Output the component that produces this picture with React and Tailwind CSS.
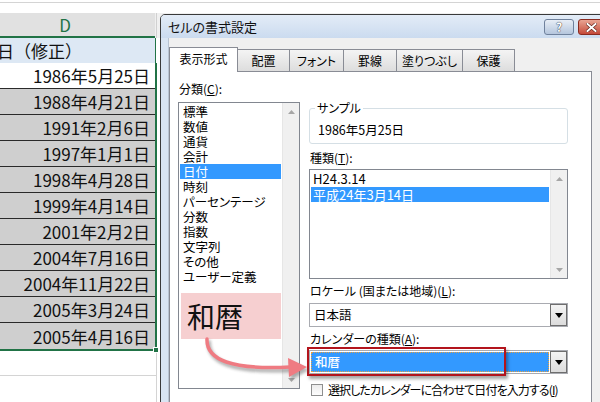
import React from "react";

const JP = "font-['Noto_Sans_CJK_JP',sans-serif]";

function Tri({ up, color = "#a6a6a6", w = 7, h = 4 }) {
  return (
    <svg width={w} height={h} viewBox="0 0 7 4">
      {up ? <polygon points="0,4 7,4 3.5,0" fill={color} /> : <polygon points="0,0 7,0 3.5,4" fill={color} />}
    </svg>
  );
}

function VScroll() {
  return (
    <div className="flex flex-col w-[17px] shrink-0 h-full bg-[#f0f0f0] border-l border-[#e6e6e6]">
      <div className="h-[17px] flex items-center justify-center"><Tri up /></div>
      <div className="flex-1" />
      <div className="h-[17px] flex items-center justify-center"><Tri /></div>
    </div>
  );
}

function DropBtn() {
  return (
    <div className="w-[17px] h-full border border-[#6e6e6e] bg-linear-to-b from-[#f4f4f4] to-[#dcdcdc] flex items-center justify-center">
      <svg width="8" height="5" viewBox="0 0 8 5"><polygon points="0,0 8,0 4,5" fill="#000" /></svg>
    </div>
  );
}

const dates = [
  "1986年5月25日",
  "1988年4月21日",
  "1991年2月6日",
  "1997年1月1日",
  "1998年4月28日",
  "1999年4月14日",
  "2001年2月2日",
  "2004年7月16日",
  "2004年11月22日",
  "2005年3月24日",
  "2005年4月16日",
];

const cats = ["標準", "数値", "通貨", "会計", "日付", "時刻", "パーセンテージ", "分数", "指数", "文字列", "その他", "ユーザー定義"];

function Sheet() {
  return (
    <div className={`flex flex-col w-full ${JP}`}>
      <div className="h-[13px] pt-[2px]">
        <div className="border-t border-[#d4d4d4]" />
      </div>
      <div className="h-[25px] flex bg-[#f0f0f0]">
        <div className="w-[155px] h-full bg-[#e1e1e1] border-b-2 border-[#217346] flex">
          <div className="w-[130px] flex items-center justify-center text-[17px] text-[#217346] leading-none">D</div>
        </div>
        <div className="w-[2px] h-full border-r border-[#d0d0d0]" />
      </div>
      <div className="h-[25px] flex">
        <div className="w-[156px] h-full bg-[#dde8f4] border-r border-[#217346] flex items-center">
          <div className="w-[82px] shrink-0 flex justify-end whitespace-nowrap text-[17px] text-[#111] leading-none">
            <span className="shrink-0">生日（修正）</span>
          </div>
        </div>
      </div>
      <div className="w-[157px] border-r-2 border-b-2 border-[#217346]">
        {dates.map((d, i) => (
          <div
            key={d}
            className={`h-[26px] flex items-center justify-end pr-[5px] text-[17px] leading-none text-[#111] border-b border-[#2a2a2a] last:border-b-0 ${i === 0 ? "bg-white" : "bg-[#cfcfcf]"}`}
          >
            {d}
          </div>
        ))}
      </div>
      <div className="h-[25px] w-[157px] border-r border-b border-[#d4d4d4]" />
      <div className="h-[30px] w-[157px] border-r border-[#d4d4d4]" />
    </div>
  );
}

function Dialog() {
  const tabs = [
    { t: "配置", w: "w-[53px]" },
    { t: "フォント", w: "w-[55px]" },
    { t: "罫線", w: "w-[54px]" },
    { t: "塗りつぶし", w: "w-[67px]" },
    { t: "保護", w: "w-[53px]" },
  ];
  return (
    <div className={`absolute left-[160px] top-[14px] w-[446px] h-[392px] border border-[#3a3a3a] rounded-tl-[5px] bg-[#d9e5f3] flex flex-col ${JP} text-[12px] text-black [font-feature-settings:'palt']`}>
      <div className="h-[23px] bg-linear-to-b from-[#e3ecf7] to-[#cbdbef] rounded-tl-[4px] flex items-center pl-[7px]">
        <span className="text-[13px] leading-none text-[#111]">セルの書式設定</span>
        <div className="ml-auto flex items-start h-full pt-[4px] gap-[4px]">
          <div className="w-[30px] h-[16px] rounded-[3px] border border-[#6f819c] bg-linear-to-b from-[#e8eef6] to-[#b5c6dd] flex items-center justify-center text-[12px] font-bold text-white leading-none [text-shadow:0_0_1px_#334,0_0_1px_#334]">?</div>
          <div className="w-[27px] h-[16px] rounded-[3px] border border-[#8a2b20] bg-linear-to-b from-[#e8a493] to-[#c4493a] flex items-center justify-center">
            <svg width="11" height="9" viewBox="0 0 11 9">
              <path d="M1.5 1 L9.5 8 M9.5 1 L1.5 8" stroke="#5a1a12" strokeWidth="3.2" strokeLinecap="square" />
              <path d="M1.5 1 L9.5 8 M9.5 1 L1.5 8" stroke="#fff" strokeWidth="2" strokeLinecap="square" />
            </svg>
          </div>
        </div>
      </div>
      <div className="flex-1 flex">
        <div className="w-[7px]" />
        <div className="w-[429px] bg-[#f0f0f0] border-l border-[#b9c4d2] flex flex-col pt-[9px]">
          <div className="flex items-end h-[25px] pl-[0px] relative z-10">
            <div className="w-[69px] h-[25px] bg-white border border-b-0 border-[#898c95] flex items-center justify-center pb-[2px]">表示形式</div>
            {tabs.map((t) => (
              <div key={t.t} className={`${t.w} ml-[-1px] h-[22px] mb-[1px] bg-linear-to-b from-[#f4f4f4] to-[#dddddd] border border-b-0 border-[#898c95] flex items-center justify-center`}>
                {t.t}
              </div>
            ))}
          </div>
          <div className="w-[423px] flex-1 bg-white border border-[#898c95] mt-[-1px] flex pl-[8px]">
            <div className="w-[122px] flex flex-col pt-[9px]">
              <div className="h-[16px] leading-[16px] pl-[1px]">分類(<span className="underline">C</span>):</div>
              <div className="mt-[5px] h-[287px] border border-[#828790] flex">
                <div className="flex-1 flex flex-col pt-[1px] pl-[1px] pr-[1px]">
                  {cats.map((c) => (
                    <div key={c} className={`h-[15px] leading-[15px] pl-[3px] text-[12.5px] whitespace-nowrap ${c === "日付" ? "bg-[#3399ff] text-white" : ""}`}>
                      {c}
                    </div>
                  ))}
                  <div className="mt-[9px] ml-[1px] h-[46px] bg-[#f6cfd0] flex items-center pl-[6px] text-[28px] leading-none text-[#111]">和暦</div>
                </div>
                <VScroll />
              </div>
            </div>
            <div className="w-[259px] ml-[9px] flex flex-col">
              <div className="mt-[36px] h-[36px] relative border border-[#d5dfe5] rounded-[3px] pl-[8px] pt-[13px] leading-[16px] text-[12.5px]">
                <span className="absolute top-[-9px] left-[5px] bg-white px-[2px] leading-[16px] text-[12px]">サンプル</span>
                1986年5月25日
              </div>
              <div className="mt-[6px] h-[16px] leading-[16px] pl-[1px]">種類(<span className="underline">T</span>):</div>
              <div className="mt-[3px] h-[110px] border border-[#828790] flex">
                <div className="flex-1 flex flex-col pt-[1px] pl-[1px] pr-[1px] text-[13px]">
                  <div className="h-[16px] leading-[16px] pl-[2px]">H24.3.14</div>
                  <div className="h-[15px] leading-[15px] pl-[2px] bg-[#3399ff] text-white">平成24年3月14日</div>
                </div>
                <VScroll />
              </div>
              <div className="mt-[4px] h-[16px] leading-[16px] pl-[1px]">ロケール (国または地域)(<span className="underline">L</span>):</div>
              <div className="mt-[4px] h-[24px] border border-[#a9abb1] flex bg-white">
                <div className="flex-1 flex items-center pl-[4px] text-[12.5px]">日本語</div>
                <div className="h-full"><DropBtn /></div>
              </div>
              <div className="mt-[4px] h-[16px] leading-[16px] pl-[1px]">カレンダーの種類(<span className="underline">A</span>):</div>
              <div className="mt-[3px] h-[24px] border border-[#a9abb1] flex bg-white">
                <div className="flex-1 p-[1px] flex">
                  <div className="flex-1 bg-[#3399ff] border border-dotted border-[#e8a040] flex items-center pl-[3px] text-white text-[12.5px] font-medium">和暦</div>
                </div>
                <div className="h-full"><DropBtn /></div>
              </div>
              <div className="mt-[9px] flex items-center h-[14px]">
                <div className="w-[12px] h-[12px] shrink-0 ml-[2px] border border-[#8e8f8f] bg-linear-to-b from-[#ececec] to-[#fdfdfd]" />
                <span className="ml-[5px] leading-[14px] whitespace-nowrap tracking-[-0.9px]">選択したカレンダーに合わせて日付を入力する(<span className="underline">I</span>)</span>
              </div>
            </div>
          </div>
        </div>
        <div className="w-[3px] bg-[#f0f0f0]" />
      </div>
    </div>
  );
}

export default function App() {
  return (
    <div className="relative w-[600px] h-[402px] overflow-hidden bg-white">
      <Sheet />
      <div className="absolute left-[153px] top-[347px] w-[6px] h-[6px] bg-[#217346] border border-white" />
      <Dialog />
      <div className="absolute left-[307px] top-[347px] w-[199px] h-[29px] border-2 border-[#b3141c] shadow-[2px_3px_3px_rgba(0,0,0,0.35)]" />
      <svg className="absolute left-0 top-0 pointer-events-none" width="600" height="402" viewBox="0 0 600 402">
        <defs>
          <filter id="blur" x="-20%" y="-20%" width="140%" height="140%">
            <feGaussianBlur stdDeviation="1.6" />
          </filter>
        </defs>
        <g filter="url(#blur)" opacity="0.45" transform="translate(2,3)">
          <path d="M207 339 C 206 360, 232 370, 290 367" stroke="#555" strokeWidth="4" fill="none" strokeLinecap="round" />
          <polygon points="288,358 307,367 289,377" fill="#555" />
        </g>
        <path d="M207 339 C 206 360, 232 370, 290 367" stroke="#ef7b82" strokeWidth="3.5" fill="none" strokeLinecap="round" />
        <polygon points="288,358 307,367 289,377" fill="#ef7b82" />
      </svg>
    </div>
  );
}
